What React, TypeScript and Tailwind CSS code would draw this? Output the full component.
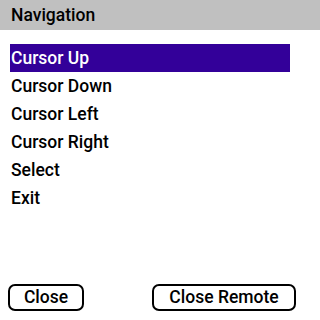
export default function App() {
  const items = ["Cursor Up", "Cursor Down", "Cursor Left", "Cursor Right", "Select", "Exit"];
  return (
    <div
      className="w-[320px] h-[320px] bg-white relative overflow-hidden text-black font-medium"
      style={{ fontFamily: 'Roboto, "Liberation Sans", Arial, sans-serif' }}
    >
      <div className="h-[30px] bg-[#c0c0c0] flex items-center pl-[11px] pt-[2px] text-[17.5px] leading-none">
        Navigation
      </div>
      <div className="mt-[14px] flex flex-col">
        {items.map((t, i) => (
          <div
            key={t}
            className={
              i === 0
                ? "ml-[10px] w-[280px] h-[28px] flex items-center pl-[1px] pt-[1px] bg-[#330099] text-white text-[17.5px] leading-none"
                : "ml-[10px] w-[280px] h-[28px] flex items-center pl-[1px] pt-[1px] text-[17.5px] leading-none"
            }
          >
            {t}
          </div>
        ))}
      </div>
      <div className="absolute left-0 top-[284px] w-full flex">
        <div className="ml-[8px] w-[76px] h-[27px] border-2 border-black rounded-[7px] flex items-center justify-center text-[17.5px] leading-none">
          Close
        </div>
        <div className="ml-[68px] w-[144px] h-[27px] border-2 border-black rounded-[7px] flex items-center justify-center text-[17.5px] leading-none">
          Close Remote
        </div>
      </div>
    </div>
  );
}
